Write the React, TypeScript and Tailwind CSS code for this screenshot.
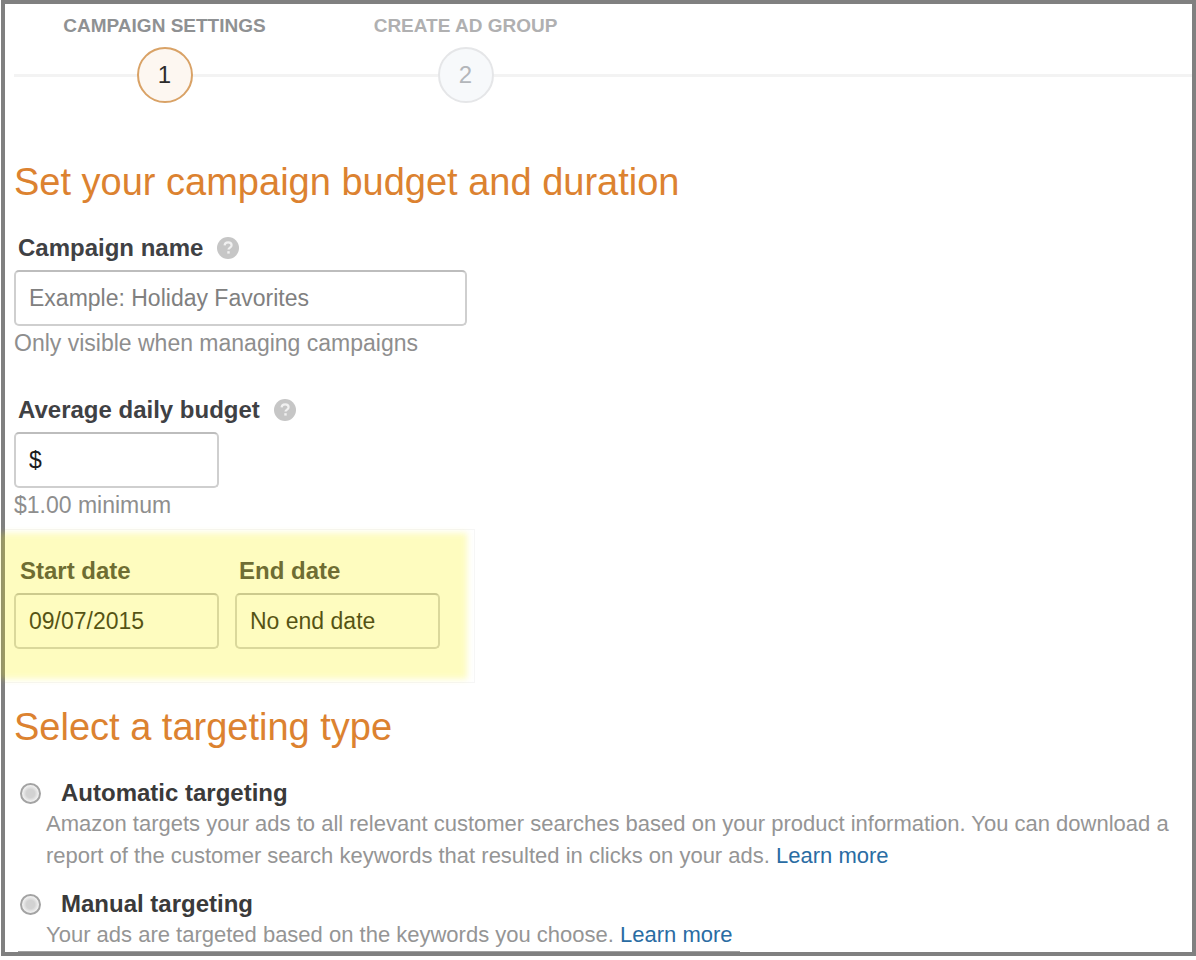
import React from "react";

const steps = [
  {
    number: 1,
    title: "CAMPAIGN SETTINGS",
    titleClass: "text-[#8f9193]",
    circleClass: "border-[#d9a266] bg-[#fdf7f1] text-[#2b2b2b]",
  },
  {
    number: 2,
    title: "CREATE AD GROUP",
    titleClass: "text-[#b0b0b1]",
    circleClass: "border-[#e5e6e8] bg-[#f7f9fb] text-[#b3b6ba]",
  },
];

const targetingTypes = [
  {
    id: "automatic",
    title: "Automatic targeting",
    description:
      "Amazon targets your ads to all relevant customer searches based on your product information. You can download a report of the customer search keywords that resulted in clicks on your ads.",
  },
  {
    id: "manual",
    title: "Manual targeting",
    description: "Your ads are targeted based on the keywords you choose.",
  },
];

const inputClass =
  "block h-14 rounded-[5px] border-2 border-[#cfcfcf] border-t-[#bdbdbd] bg-white px-[13px] text-[23px] text-[#1c1c1c] placeholder:text-[#808080] outline-none";

const HelpButton = ({ label }: { label: string }) => (
  <button type="button" aria-label={label} className="ml-3.5">
    <svg width="22" height="22" viewBox="0 0 22 22" fill="none">
      <circle cx="11" cy="11" r="11" fill="#c6c6c6" />
      <path
        d="M7.6 8.4c.2-2 1.6-3 3.5-3s3.5 1.1 3.5 2.9c0 2.200-3.100 2.400-3.100 4.300"
        stroke="#f1f1f1"
        strokeWidth="2.200"
      />
      <rect x="10.300" y="14.200" width="2.400" height="2.400" fill="#f1f1f1" />
    </svg>
  </button>
);

const App = () => {
  return (
    <main className="ml-px border-4 border-[#808080] bg-white font-['Liberation_Sans',Arial,sans-serif]">
      {/* STEPS */}
      <div className="pl-[9px] pt-[9px]">
        <ol className="flex">
          {steps.map((step) => (
            <li
              key={step.number}
              className={`w-[301px] text-center text-[19px] leading-[26px] font-bold ${step.titleClass}`}
            >
              {step.title}
            </li>
          ))}
        </ol>
        <div className="mt-2 flex items-center">
          {steps.map((step) => (
            <div key={step.number} className="flex w-[301px] items-center">
              <span className="h-[3px] flex-1 bg-[#f3f3f3]" />
              <span
                className={`flex h-14 w-14 items-center justify-center rounded-full border-2 text-2xl ${step.circleClass}`}
              >
                {step.number}
              </span>
              <span className="h-[3px] flex-1 bg-[#f3f3f3]" />
            </div>
          ))}
          <span className="h-[3px] flex-1 bg-[#f3f3f3]" />
        </div>
      </div>

      <form className="pl-[9px]">
        {/* BUDGET */}
        <h1 className="mt-[55px] text-[38px] leading-12 text-[#dc8230]">
          Set your campaign budget and duration
        </h1>

        <div className="mt-[26px] flex h-8 items-center pl-1">
          <label htmlFor="name" className="text-2xl font-bold text-[#3f4144]">
            Campaign name
          </label>
          <HelpButton label="About campaign name" />
        </div>
        <input
          id="name"
          type="text"
          placeholder="Example: Holiday Favorites"
          className={`${inputClass} mt-1.5 w-[453px]`}
        />
        <p className="mt-px text-[23px] leading-8 text-[#8e8e8e]">
          Only visible when managing campaigns
        </p>

        <div className="mt-[35px] flex h-8 items-center pl-1">
          <label htmlFor="budget" className="text-2xl font-bold text-[#3f4144]">
            Average daily budget
          </label>
          <HelpButton label="About average daily budget" />
        </div>
        <input
          id="budget"
          type="text"
          defaultValue="$"
          className={`${inputClass} mt-1.5 w-[205px]`}
        />
        <p className="mt-px text-[23px] leading-8 text-[#8e8e8e]">
          $1.00 minimum
        </p>

        {/* DATES */}
        <div className="relative -ml-[14px] mt-2 w-[475px] pb-[34px] pl-[14px] pt-[26px]">
          <div className="flex gap-4">
            <div>
              <label
                htmlFor="start"
                className="block pl-1.5 text-2xl leading-8 font-bold text-[#3f4144]"
              >
                Start date
              </label>
              <input
                id="start"
                type="text"
                defaultValue="09/07/2015"
                className={`${inputClass} mt-1.5 w-[205px]`}
              />
            </div>
            <div>
              <label
                htmlFor="end"
                className="block pl-1 text-2xl leading-8 font-bold text-[#3f4144]"
              >
                End date
              </label>
              <input
                id="end"
                type="text"
                defaultValue="No end date"
                className={`${inputClass} mt-1.5 w-[205px]`}
              />
            </div>
          </div>
          {/* highlighter over the date fields */}
          <div className="pointer-events-none absolute inset-y-0 left-[5px] right-0 border border-l-0 border-[#f6f6f6]" />
          <div className="pointer-events-none absolute inset-y-1 left-0 right-2 bg-[#faf500]/25 blur-[3px]" />
        </div>

        {/* TARGETING */}
        <h2 className="mt-5 text-[38px] leading-12 text-[#dc8230]">
          Select a targeting type
        </h2>
        <div className="mt-[26px] flex flex-col gap-4">
          {targetingTypes.map((type) => (
            <div key={type.id}>
              <div className="flex h-8 items-center">
                <input
                  id={type.id}
                  type="radio"
                  name="targeting"
                  className="ml-1.5 h-[21px] w-[21px] appearance-none rounded-full border-2 border-[#a3a3a3] bg-[radial-gradient(circle,#d2d2d2_35%,#f4f4f4_70%)] checked:bg-[#555555]"
                />
                <label
                  htmlFor={type.id}
                  className="pl-5 text-2xl font-bold text-[#3a3a3a]"
                >
                  {type.title}
                </label>
              </div>
              <p className="-mt-px pl-8 text-[22px] leading-8 text-[#959595]">
                {type.description}{" "}
                <a href="#" className="text-[#2a6ca3]">
                  Learn more
                </a>
              </p>
            </div>
          ))}
        </div>
        {/* top edge of the next panel */}
        <div className="ml-1 h-px w-[722px] bg-[#a0a0a0]" />
      </form>
    </main>
  );
};

export default App;
